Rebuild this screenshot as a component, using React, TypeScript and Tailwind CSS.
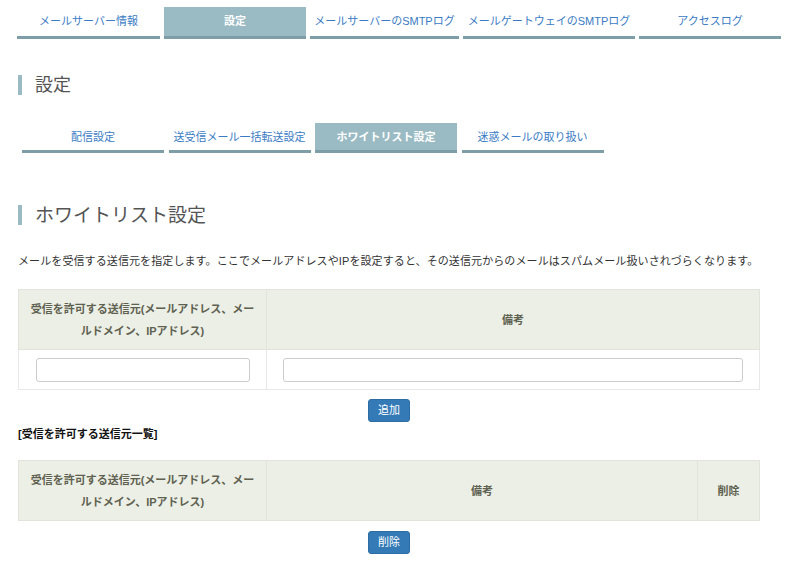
import { useState } from 'react';

const topTabs = [
  { label: 'メールサーバー情報', w: 'w-[143px]' },
  { label: '設定', w: 'w-[142px]', active: true },
  { label: 'メールサーバーのSMTPログ', w: 'w-[149px]' },
  { label: 'メールゲートウェイのSMTPログ', w: 'w-[172px]' },
  { label: 'アクセスログ', w: 'w-[142px]' },
];

const subTabs = [
  { label: '配信設定' },
  { label: '送受信メール一括転送設定' },
  { label: 'ホワイトリスト設定', active: true },
  { label: '迷惑メールの取り扱い' },
];

const SENDER_HEAD = '受信を許可する送信元(メールアドレス、メールドメイン、IPアドレス)';

function Heading({ children, className }: { children: string; className: string }) {
  return (
    <h2
      className={`ml-[18px] flex items-center border-l-4 border-[#9bbbc4] pl-[13px] leading-none font-normal text-[#555] ${className}`}
    >
      {children}
    </h2>
  );
}

function Button({ children }: { children: string }) {
  return (
    <div className="flex w-[742px] justify-center">
      <button className="h-[23px] w-[42px] rounded-[3px] border border-[#2e6da4] bg-[#337ab7] text-[11px] text-white">
        {children}
      </button>
    </div>
  );
}

export default function App() {
  const [sender, setSender] = useState('');
  const [note, setNote] = useState('');

  const th = 'border border-[#e2e4dc] bg-[#ebefe6] px-[10px] text-center align-middle text-[11px] leading-[22px] font-bold text-[#5f6150]';

  return (
    <div className="min-h-[564px] bg-white font-['Liberation_Sans','Noto_Sans_CJK_JP',sans-serif] text-[#333]">
      {/* main tabs */}
      <nav className="flex gap-[4px] pt-[7px] pl-[17px]">
        {topTabs.map((t) => (
          <a
            key={t.label}
            className={`flex h-[32px] ${t.w} items-center justify-center border-b-[3px] border-[#7d9da7] text-[11px] ${
              t.active ? 'bg-[#9bbbc4] font-bold text-white' : 'text-[#3a7bc4]'
            }`}
          >
            {t.label}
          </a>
        ))}
      </nav>

      <Heading className="mt-[36px] h-[20px] text-[18px]">設定</Heading>

      {/* sub tabs */}
      <nav className="mt-[28px] flex gap-[4.5px] pl-[22px]">
        {subTabs.map((t) => (
          <a
            key={t.label}
            className={`flex h-[30px] w-[142px] items-center justify-center border-b-[3px] border-[#7d9da7] pt-[2px] text-[11px] ${
              t.active ? 'bg-[#9bbbc4] font-bold text-white' : 'text-[#3a7bc4]'
            }`}
          >
            {t.label}
          </a>
        ))}
      </nav>

      <Heading className="mt-[52px] h-[20px] text-[19px]">ホワイトリスト設定</Heading>

      <div className="mt-[28px] ml-[18px]">
        <p className="text-[11px] leading-[16px] tracking-[0.1px] text-[#333]">
          メールを受信する送信元を指定します。ここでメールアドレスやIPを設定すると、その送信元からのメールはスパムメール扱いされづらくなります。
        </p>

        <table className="mt-[20px] w-[742px] table-fixed">
          <thead>
            <tr className="h-[60px]">
              <th className={`${th} w-[248px]`}>{SENDER_HEAD}</th>
              <th className={th}>備考</th>
            </tr>
          </thead>
          <tbody>
            <tr className="h-[40px]">
              <td className="border border-[#e8e8e8] pr-[16px] pl-[17px]">
                <input
                  value={sender}
                  onChange={(e) => setSender(e.target.value)}
                  className="block h-[24px] w-full rounded-[3px] border border-[#ccc] px-2 text-[11px]"
                />
              </td>
              <td className="border border-[#e8e8e8] pr-[16px] pl-[16px]">
                <input
                  value={note}
                  onChange={(e) => setNote(e.target.value)}
                  className="block h-[24px] w-full rounded-[3px] border border-[#ccc] px-2 text-[11px]"
                />
              </td>
            </tr>
          </tbody>
        </table>

        <div className="mt-[9px]">
          <Button>追加</Button>
        </div>

        <p className="mt-[4px] text-[11px] leading-[16px] font-bold text-[#111]">[受信を許可する送信元一覧]</p>

        <table className="mt-[18px] w-[742px] table-fixed">
          <thead>
            <tr className="h-[60px]">
              <th className={`${th} w-[248px]`}>{SENDER_HEAD}</th>
              <th className={th}>備考</th>
              <th className={`${th} w-[62px] px-0`}>削除</th>
            </tr>
          </thead>
        </table>

        <div className="mt-[10px]">
          <Button>削除</Button>
        </div>
      </div>
    </div>
  );
}
